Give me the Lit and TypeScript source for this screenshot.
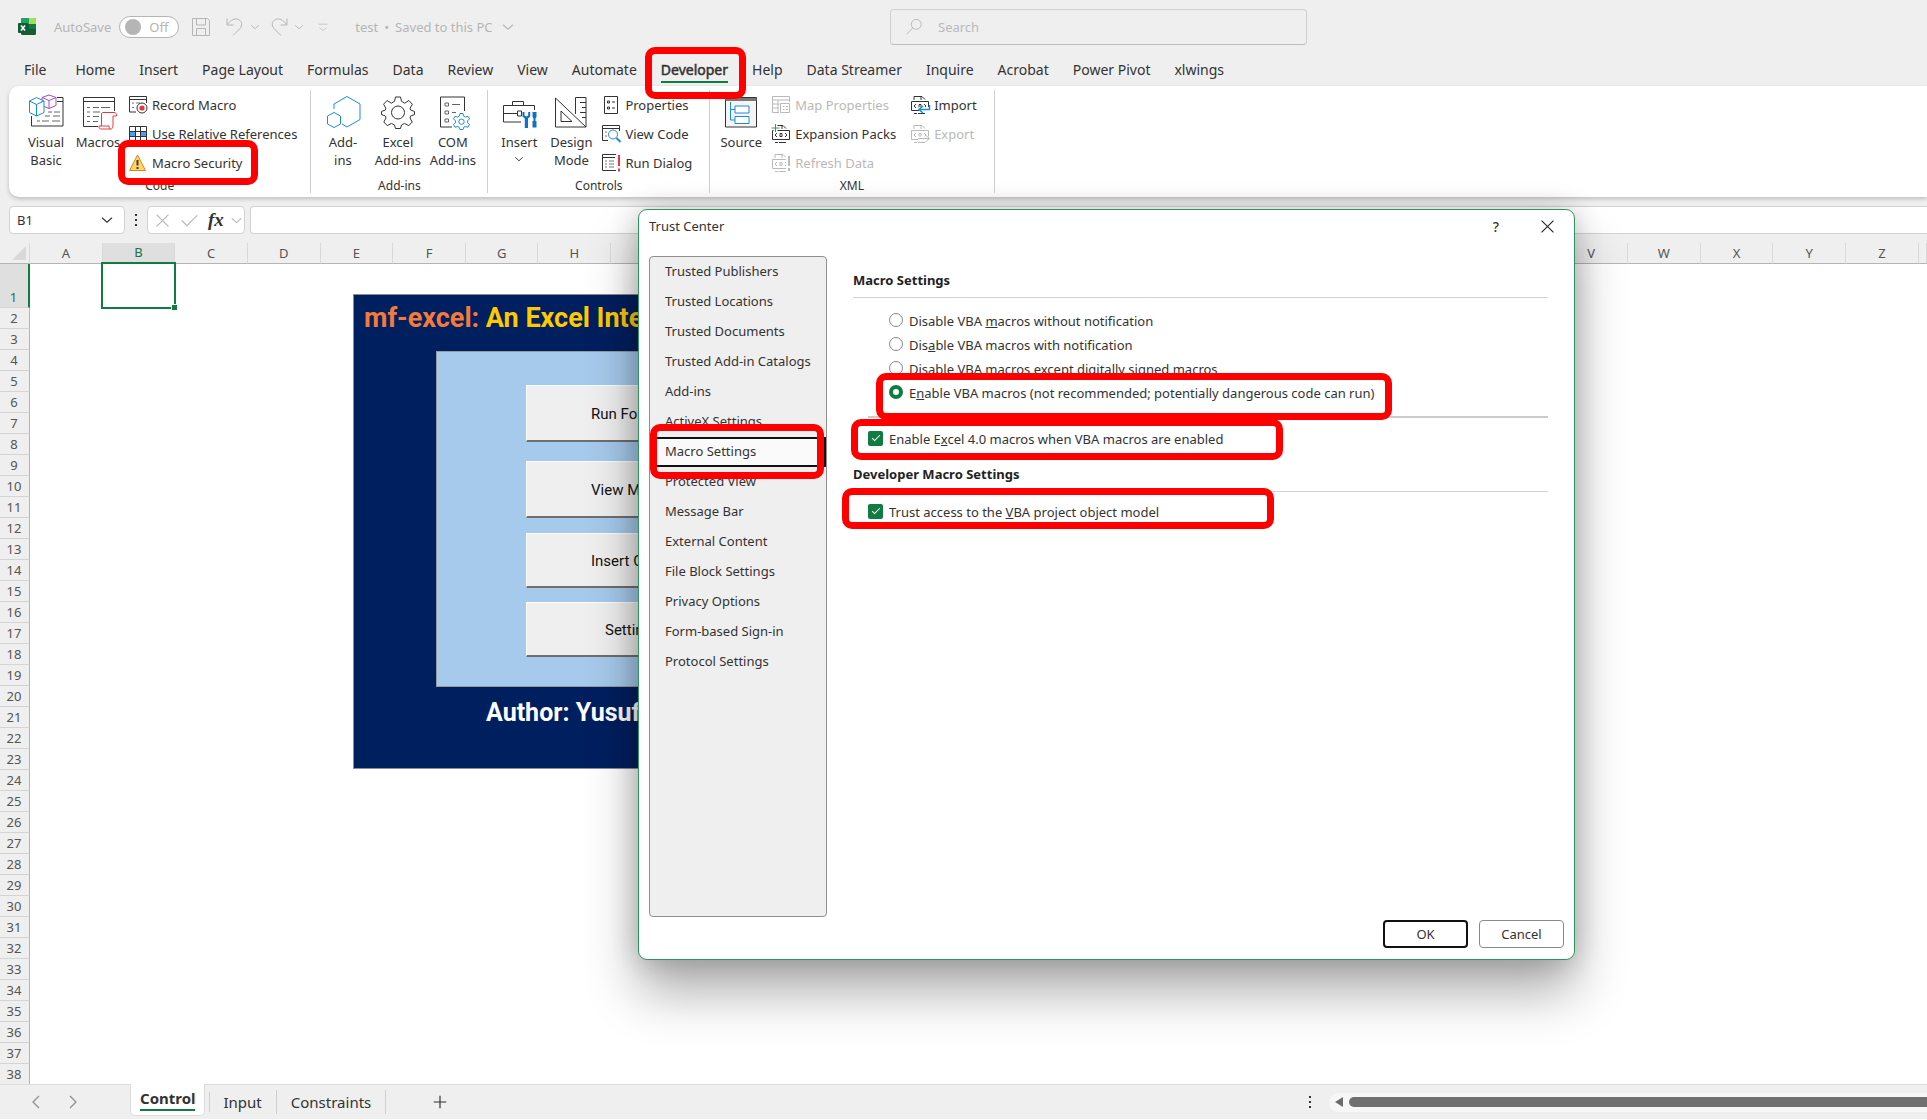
import { LitElement, html, css, svg, nothing, TemplateResult } from "lit";
import { customElement, property } from "lit/decorators.js";
import { classMap } from "lit/directives/class-map.js";

const BLUE = "#1e8bd8";
const RED = "#e8383d";

/* Glyph artwork. Large glyphs use a 36 unit box, small ones a 20 unit box. */
const LARGE: Record<string, TemplateResult> = {
  visualBasic: svg`
    <path d="M29 3.500h6v28.500H3.500V22M29 7.500h6" />
    <path d="M20 18h4M26 18h6M17 22h5M25 22h7M9 27h3M14 27h7M24 27h8" stroke="#666" />
    <path fill="#fff" stroke="#b146c2" d="M21 1l7 2.500v8L21 14.500l-7-3v-8zM14 3.500l7 3 7-3M21 6.500v8" />
    <path fill="#fff" stroke="${BLUE}" d="M8.500 3.500L16 7v11.500l-7.500 3.500L1.500 18.500V7zM1.500 7l7 3.500L16 7M8.500 10.500V22" />`,
  macros: svg`
    <path d="M18 32.500H3.500v-29h31V17M3.500 7.500h31" />
    <path d="M7 13.500h3M13 13.500h6M21 13.500h9M7 18h3M13 18h7M7 22.500h3M13 22.500h6M7 27.500h3M13 27.500h5" stroke="#666" />
    <path fill="#fff" stroke="${RED}" d="M23 18.500h11c2 0 3 1.500 2.500 3.500H33v10c0 2-1 3-2.500 3H20.500c-1 0-1.500-1-1.500-3h10c0 2 .5 3 1.500 3M21.500 32V20c0-1 .5-1.500 1.500-1.500" />`,
  addins: svg`<path stroke="${BLUE}" d="M9 15V10l13-7.500 13 7.500v15.500l-13 7.500-5-3M9 18.500l6.500 3.500v8L9 33.500 2.500 30v-8z" />`,
  excelAddins: svg`
    <path d="M14.500 7.300l1-4.300h5l1 4.300 3.200 1.900 4.200-2.700 3.500 3.700-2.200 4 .3 1.700 4 1.600v3l-4 1.600-.5 1.900 2.200 4-3.500 3.700-4.200-2.300-3 1.600-1 3.500h-5l-1-3.500-3-1.600-4.200 2.300-3.500-3.700 2.200-4-.5-1.900-4-1.600v-3l4-1.600.3-1.700-2.200-4 3.500-3.700 4.200 2.700z" />
    <circle cx="18" cy="18.500" r="6.500" />`,
  comAddins: svg`
    <path d="M17 33H5.500V3h24v14" />
    <path d="M10 9h3.500v3H10zM10 17h3.500v3H10zM10 25h3.500v3H10zM17 10.500h8M17 18.500h4" stroke="#666" />
    <path fill="#fff" stroke="${BLUE}" d="M25 19.500h3l.8 2.700 1.500.9 2.700-.8 1.500 2.600-2 2v1.700l2 2-1.500 2.600-2.700-.7-1.500.8-.8 2.200h-3l-.8-2.200-1.500-.8-2.700.7-1.500-2.600 2-2v-1.700l-2-2 1.500-2.600 2.700.8 1.500-.9z" />
    <circle cx="26.500" cy="27.700" r="2.700" stroke="${BLUE}" />`,
  insert: svg`
    <path d="M20 28H2.500V11.500h31V16M11.500 11V7.500h11V11M2.500 19.500h14M16.500 17h4v5h-4z" />
    <path fill="#1270c4" stroke="none" d="M21.500 18v4.500l2.300 2V34h3.200v-9.500l2.200-2V18h-2v3.500l-1.800 1-1.900-1V18zM31.500 18h4v5l-1 1.500v2.500h1v6.500h-4V27h1v-2.500l-1-1.500z" />`,
  design: svg`
    <path d="M2.500 4v29H33zM8 17v10.500h11zM22.500 20V3.500H33V33M27 8.500h6M29 13.500h4M27 18.500h6M29 23.500h4" />`,
  source: svg`
    <path fill="#f5f5f5" d="M2.500 3.500h31v29.500h-31z" />
    <path d="M2.500 5.500h31" stroke-width="3" stroke="#777" />
    <path stroke="${BLUE}" fill="#fff" d="M12 12h14v7H12zM12 22.500h14v7H12z" />
    <path stroke="${BLUE}" d="M7.500 8v18H12M7.500 15.500H12" />`,
};

const xmlDoc = svg`
  <path d="M4 5V1.500h8l3 3M11 1.500V5M1.500 6.500h17v9h-17zM4 18.500h3M8 18.500h7" />
  <path d="M6 9l-2 2 2 2M14 9l2 2-2 2M9 9.500h2v3H9z" />`;

const SMALL: Record<string, TemplateResult> = {
  record: svg`
    <path d="M8 17H1.500V1.500h17V8M1.500 4.500h17" /><path d="M4 8h2M8 8h4M4 12.500h2" stroke="#777" />
    <circle cx="14" cy="13" r="5" fill="#fff" /><circle cx="14" cy="13" r="2.600" fill="${RED}" stroke="none" />`,
  relative: svg`
    <path fill="#fff" d="M1.500 2.500h17v15h-17z" /><path stroke="none" fill="#4aa3ea" d="M2 7.500h5v5H2zM13 7.500h5v5h-5z" />
    <path d="M1.500 7.500h17M1.500 12.500h17M7.500 2.500v15M12.500 2.500v15" />`,
  security: svg`
    <path d="M9.500 2L17.500 17.500H1.500z" fill="#fbd66b" stroke="#e8811a" />
    <path d="M9.500 7v5.500M9.500 14v2" stroke="#4a3b1c" stroke-width="2" />`,
  properties: svg`<path d="M3.500 1.500h13v17h-13z" /><path d="M6.500 6h2v2h-2zM6.500 12h2v2h-2zM11 7h3M11 13h3" />`,
  viewCode: svg`
    <path d="M7 16.500H1.500v-15h17V7M1.500 4.500h17" /><path d="M4 8h2M4 12h2" stroke="#777" />
    <circle cx="12" cy="10.500" r="4.500" stroke="${BLUE}" fill="#fff" /><path d="M15.500 14l4 4" stroke="${BLUE}" stroke-width="2" />`,
  runDialog: svg`
    <path d="M15 17.500H1.500v-16H15M1.500 4.500H14" /><path d="M4 8h2M8 8h5M4 11h2M8 11h5M4 14h2M8 14h5" stroke="#777" />
    <path d="M18 2v11M18 15.500v3" stroke="${RED}" stroke-width="2" />`,
  mapProperties: svg`
    <path d="M8 17.500H1.500v-16h17V7M1.500 5h17M1.500 9h7M1.500 13h6M7 5v12" />
    <path fill="#fff" d="M9.500 8.500h9v9h-9z" /><path d="M12 11.500h1.500M15 11.500h2M12 14.500h1.500M15 14.500h2" />`,
  expansion: svg`${xmlDoc}<path d="M4.500 0v8M.5 4h8" stroke="#fff" stroke-width="4" /><path d="M4.500 0v8M.5 4h8" stroke="#2f9e52" />`,
  refresh: svg`${xmlDoc}<path d="M17.500 3v16" stroke="#fff" stroke-width="5" /><path d="M18 3v10M18 15v3" stroke-width="2" />`,
  importXml: svg`${xmlDoc}<path d="M9 14.500h11" stroke="#fff" stroke-width="5" /><path d="M19.500 10v4.500H9M13 11l-4 3.500 4 3.500" stroke="${BLUE}" stroke-width="1.500" />`,
  exportXml: svg`${xmlDoc}<path d="M8 14.500h11" stroke="#fff" stroke-width="4" /><path d="M8 14.500h11M15.500 11l4 3.500-4 3.500" />`,
  save: svg`<path d="M1.500 1.500h15l2 2v15h-17zM5.500 2v6h9V2M5.500 18v-6.500h9V18" />`,
  undo: svg`<path d="M2 1.500V8h6.500M2.500 7.500C6 2.500 10 1 13.500 2.500c4 2 4 6 1.500 9L8 18.500" />`,
  redo: svg`<path d="M18 1.500V8h-6.500M17.500 7.500C14 2.500 10 1 6.500 2.500c-4 2-4 6-1.500 9l7 7" />`,
  chevron: svg`<path stroke-width="1.300" d="M4.500 7.500l5.500 5 5.500-5" />`,
  customize: svg`<path d="M4 6h12M5 11l5 4 5-4" />`,
  search: svg`<circle cx="12.500" cy="7" r="5.500" /><path d="M8.500 11L2 18" />`,
  close: svg`<path stroke-width="1.300" d="M3 3l14 14M17 3L3 17" />`,
  check: svg`<path stroke-width="1.300" d="M1 10l6 6L19 4" />`,
  prev: svg`<path stroke-width="1.300" d="M13 4l-6 6 6 6" />`,
  next: svg`<path stroke-width="1.300" d="M7 4l6 6-6 6" />`,
  plus: svg`<path stroke-width="1.300" d="M10 3v14M3 10h14" />`,
  dots: svg`<path stroke="none" fill="currentColor" d="M9 4h2v2H9zM9 9h2v2H9zM9 14h2v2H9z" />`,
  scrollLeft: svg`<path stroke="none" fill="#6b6b6b" d="M14 5v10L6 10z" />`,
};

@customElement("ui-glyph")
class UiGlyph extends LitElement {
  @property() name = "";
  @property({ type: Boolean, reflect: true }) large = false;

  static styles = css`
    :host { display: inline-flex; flex: none; width: 20px; height: 20px; }
    :host([large]) { width: 36px; height: 36px; }
    .art { width: 100%; height: 100%; fill: none; stroke: currentColor; overflow: visible; }
  `;

  render() {
    const box = this.large ? 36 : 20;
    const art = this.large ? LARGE[this.name] : SMALL[this.name];
    return html`<svg class="art" viewBox="0 0 ${box} ${box}" aria-hidden="true">${art}</svg>`;
  }
}

type Small = { icon: string; label: string; disabled?: boolean; marked?: boolean };
type Big = { icon: string; lines: string[]; menu?: boolean };
type Group = { name: string; big: Big[]; small: Small[][] };

const GROUPS: Group[] = [
  {
    name: "Code",
    big: [{ icon: "visualBasic", lines: ["Visual", "Basic"] }, { icon: "macros", lines: ["Macros"] }],
    small: [[
      { icon: "record", label: "Record Macro" },
      { icon: "relative", label: "Use Relative References" },
      { icon: "security", label: "Macro Security", marked: true },
    ]],
  },
  {
    name: "Add-ins",
    big: [
      { icon: "addins", lines: ["Add-", "ins"] },
      { icon: "excelAddins", lines: ["Excel", "Add-ins"] },
      { icon: "comAddins", lines: ["COM", "Add-ins"] },
    ],
    small: [],
  },
  {
    name: "Controls",
    big: [{ icon: "insert", lines: ["Insert"], menu: true }, { icon: "design", lines: ["Design", "Mode"] }],
    small: [[
      { icon: "properties", label: "Properties" },
      { icon: "viewCode", label: "View Code" },
      { icon: "runDialog", label: "Run Dialog" },
    ]],
  },
  {
    name: "XML",
    big: [{ icon: "source", lines: ["Source"] }],
    small: [
      [
        { icon: "mapProperties", label: "Map Properties", disabled: true },
        { icon: "expansion", label: "Expansion Packs" },
        { icon: "refresh", label: "Refresh Data", disabled: true },
      ],
      [
        { icon: "importXml", label: "Import" },
        { icon: "exportXml", label: "Export", disabled: true },
      ],
    ],
  },
];

const TABS = ["File", "Home", "Insert", "Page Layout", "Formulas", "Data", "Review", "View", "Automate",
  "Developer", "Help", "Data Streamer", "Inquire", "Acrobat", "Power Pivot", "xlwings"];

@customElement("excel-ribbon")
class ExcelRibbon extends LitElement {
  static styles = css`
    :host { display: block; }
    button { font: inherit; color: inherit; background: none; border: 0; padding: 0; margin: 0; }
    .tabs { display: flex; gap: 24px; padding: 2px 24px 0; height: 34px; box-sizing: border-box; align-items: center; font-size: 14px; }
    .tab { position: relative; white-space: nowrap; line-height: 20px; }
    .tab:first-child { margin-right: 5px; }
    .tab.active { -webkit-text-stroke: 0.5px currentColor; }
    .tab.active::before { content: ""; position: absolute; left: 0; right: 0; bottom: -3px; height: 2px; background: #107c41; }
    .callout { position: absolute; border: 7px solid #f00; border-radius: 10px; pointer-events: none; z-index: 3; }
    .tab .callout { inset: -13px -18px -19px -16px; }
    .small .callout { inset: -8px -16px -8px -10px; }
    .ribbon { display: flex; margin-left: 9px; height: 111px; box-sizing: border-box; padding: 4px 0; background: #fff;
      border-radius: 10px 0 0 10px; box-shadow: 0 2px 4px rgba(0, 0, 0, 0.2); font-size: 13px; }
    .group { display: flex; flex-direction: column; border-right: 1px solid #d0d0d0; }
    .body { display: flex; flex: none; height: 89px; box-sizing: border-box; gap: 4px; padding: 0 17px 0 5px; }
    .group:first-child .body { padding: 0 13px 0 11px; }
    .plain .body { padding: 0 7px 0 4px; }
    .bigs { display: flex; }
    .big { display: flex; flex-direction: column; align-items: center; width: 52px; line-height: 18px; padding-top: 4px; }
    .plain .big { width: 55px; }
    .words { display: flex; flex-direction: column; align-items: center; padding-top: 3px; }
    .menu { width: 14px; height: 16px; }
    .list { display: flex; flex-direction: column; align-items: flex-start; padding-right: 10px; }
    .list:last-child { padding-right: 0; }
    .small { position: relative; display: flex; align-items: center; gap: 4px; height: 29px; line-height: 18px; white-space: nowrap; }
    .small:disabled { color: #b9b9b9; }
    .name { text-align: center; font-size: 12px; line-height: 14px; }
  `;

  private bigButton(b: Big) {
    return html`<button class="big">
      <ui-glyph large name=${b.icon}></ui-glyph>
      <span class="words">${b.lines.map((l) => html`<span>${l}</span>`)}
        ${b.menu ? html`<ui-glyph class="menu" name="chevron"></ui-glyph>` : nothing}</span>
    </button>`;
  }

  private smallButton(s: Small) {
    return html`<button class="small" ?disabled=${s.disabled}>
      <ui-glyph name=${s.icon}></ui-glyph><span>${s.label}</span>
      ${s.marked ? html`<span class="callout"></span>` : nothing}
    </button>`;
  }

  render() {
    return html`
      <nav class="tabs">
        ${TABS.map((t) => html`<button class=${classMap({ tab: true, active: t === "Developer" })}>${t}${t === "Developer"
          ? html`<span class="callout"></span>` : nothing}</button>`)}
      </nav>
      <div class="ribbon">
        ${GROUPS.map((g) => html`
          <section class=${classMap({ group: true, plain: !g.small.length })}>
            <div class="body">
              <div class="bigs">${g.big.map((b) => this.bigButton(b))}</div>
              ${g.small.map((col) => html`<div class="list">${col.map((s) => this.smallButton(s))}</div>`)}
            </div>
            <div class="name">${g.name}</div>
          </section>`)}
      </div>`;
  }
}

const PAGES = ["Trusted Publishers", "Trusted Locations", "Trusted Documents", "Trusted Add-in Catalogs", "Add-ins",
  "ActiveX Settings", "Macro Settings", "Protected View", "Message Bar", "External Content", "File Block Settings",
  "Privacy Options", "Form-based Sign-in", "Protocol Settings"];

@customElement("trust-center")
class TrustCenter extends LitElement {
  static styles = css`
    :host { display: block; box-sizing: border-box; background: #fff; border: 1px solid #2e9560; border-radius: 9px; font-size: 13px;
      box-shadow: 0 32px 52px rgba(0, 0, 0, 0.32), 0 0 28px rgba(0, 0, 0, 0.2); }
    button { font: inherit; color: inherit; background: none; border: 0; padding: 0; margin: 0; }
    .dialog { display: flex; flex-direction: column; height: 100%; }
    .title { display: flex; align-items: center; height: 32px; padding: 0 17px 0 10px; }
    .title h1 { flex: 1; font-size: 13px; font-weight: 400; margin: 0; }
    .icon { display: flex; width: 20px; justify-content: center; font-size: 14px; font-weight: 500; }
    .close { margin-left: 31px; color: #222; }
    .close ui-glyph { width: 17px; height: 17px; }
    .main { flex: 1; display: flex; padding: 14px 26px 0 10px; gap: 26px; }
    .pages { width: 178px; box-sizing: border-box; background: #efefef; border: 1px solid #8f8f8f; border-radius: 4px; }
    .page { position: relative; display: block; width: 100%; height: 30px; padding: 0 0 2px 15px; text-align: left; white-space: nowrap; }
    .page.current { background: #fafafa; box-shadow: inset 0 0 0 2px #111; }
    .page .callout { inset: -13px 2px -12px 0; }
    .callout { position: absolute; border: 7px solid #f00; border-radius: 10px; pointer-events: none; z-index: 2; }
    .content { flex: 1; }
    h2 { margin: 0; font-size: 13px; line-height: 18px; font-weight: 700; color: #222; }
    .first { padding: 15px 0 8px; border-bottom: 1px solid #d2d2d2; }
    .second { padding: 4px 0 8px; border-bottom: 1px solid #d2d2d2; }
    .choices { border: 0; margin: 0 0 0 15px; padding: 11px 0 11px 21px; border-bottom: 2px solid #cbcbcb; }
    .choice { position: relative; display: flex; align-items: center; height: 24px; gap: 6px; width: max-content; }
    .option { position: relative; display: flex; align-items: center; height: 42px; gap: 6px; margin: 0 0 1px 15px; width: max-content; }
    .option.trust { height: 40px; }
    input { appearance: none; box-sizing: border-box; margin: 0 0 2px; flex: none; }
    input[type="radio"] { width: 14px; height: 14px; border: 1px solid #8a8a8a; border-radius: 50%; background: #fff; }
    input[type="radio"]:checked { border: 4px solid #107c41; }
    input[type="checkbox"] { position: relative; width: 15px; height: 15px; border-radius: 2px; background: #107c41; }
    input[type="checkbox"]::after { content: ""; position: absolute; left: 4px; top: 4px; width: 7px; height: 3px; box-sizing: content-box;
      border: solid #fff; border-width: 0 0 1px 1px; transform: rotate(-45deg); }
    .choice .callout { inset: -8px -18px -15px -13px; }
    .option .callout { inset: 1px -60px 0 -17px; }
    .option.trust .callout { inset: -4px -115px 3px -26px; }
    .footer { display: flex; justify-content: flex-end; gap: 11px; padding: 3px 10px 11px; }
    .action { width: 85px; height: 28px; border: 1px solid #8a8a8a; border-radius: 4px; }
    .action.primary { border: 2px solid #111; }
  `;

  render() {
    return html`<div class="dialog" role="dialog" aria-label="Trust Center">
      <div class="title">
        <h1>Trust Center</h1>
        <button class="icon">?</button>
        <button class="icon close" aria-label="Close"><ui-glyph name="close"></ui-glyph></button>
      </div>
      <div class="main">
        <nav class="pages">
          ${PAGES.map((p) => {
            const current = p === "Macro Settings";
            return html`<button class=${classMap({ page: true, current })}>${p}${current ? html`<span class="callout"></span>` : nothing}</button>`;
          })}
        </nav>
        <div class="content">
          <h2 class="first">Macro Settings</h2>
          <div class="choices" role="radiogroup" aria-label="Macro Settings">
            <label class="choice"><input type="radio" name="vba" /><span>Disable VBA <u>m</u>acros without notification</span></label>
            <label class="choice"><input type="radio" name="vba" /><span>Dis<u>a</u>ble VBA macros with notification</span></label>
            <label class="choice"><input type="radio" name="vba" /><span>Disable VBA macros except di<u>g</u>itally signed macros</span></label>
            <label class="choice"><input type="radio" name="vba" checked /><span>E<u>n</u>able VBA macros (not recommended; potentially dangerous code can run)</span><span class="callout"></span></label>
          </div>
          <label class="option"><input type="checkbox" checked /><span>Enable E<u>x</u>cel 4.0 macros when VBA macros are enabled</span><span class="callout"></span></label>
          <h2 class="second">Developer Macro Settings</h2>
          <label class="option trust"><input type="checkbox" checked /><span>Trust access to the <u>V</u>BA project object model</span><span class="callout"></span></label>
        </div>
      </div>
      <div class="footer">
        <button class="action primary">OK</button>
        <button class="action">Cancel</button>
      </div>
    </div>`;
  }
}

const COLUMNS = [..."ABCDEFGHIJKLMNOPQRSTUVWXYZ"];
const ROWS = Array.from({ length: 38 }, (_, i) => i + 1);

@customElement("app-root")
class AppRoot extends LitElement {
  static styles = css`
    :host { display: flex; flex-direction: column; height: 100vh; background: #efefef; overflow: hidden; color: #333;
      font-family: "Noto Sans", "Open Sans", sans-serif; font-size: 13px; }
    button { font: inherit; color: inherit; background: none; border: 0; padding: 0; margin: 0; }
    .bar { display: grid; grid-template-columns: 890fr 417fr 620fr; height: 54px; color: #b5b5b5; }
    .quick { display: flex; align-items: center; padding-left: 17px; white-space: nowrap; }
    .logo { width: 20px; height: 20px; margin-right: 17px; }
    .auto { display: flex; align-items: center; gap: 8px; margin-right: 12px; }
    .pill { display: flex; align-items: center; gap: 8px; box-sizing: border-box; width: 60px; height: 22px; padding-left: 5px;
      border: 1px solid #b5b5b5; border-radius: 11px; background: #fff; }
    .switch { appearance: none; width: 16px; height: 16px; margin: 0; border-radius: 50%; background: #b5b5b5; }
    .quick button { display: flex; }
    .quick .save { margin-right: 14px; }
    .quick .arrow { width: 12px; margin: 0 9px 0 3px; }
    .arrow ui-glyph { width: 14px; height: 20px; }
    .quick .more { margin: 0 25px 0 3px; }
    .more ui-glyph { width: 14px; height: 14px; }
    .quick .file { align-items: center; gap: 6px; }
    .file ui-glyph { width: 18px; }
    .search { display: flex; align-items: center; gap: 15px; box-sizing: border-box; height: 36px; margin-top: 9px; padding: 0 14px;
      border: 1px solid #d0d0d0; border-bottom-color: #bdbdbd; border-radius: 4px; }
    .search input { flex: 1; border: 0; background: none; font: inherit; padding: 0; outline: 0; }
    .search input::placeholder { color: #b9b9b9; }
    .search ui-glyph { width: 18px; height: 18px; }
    excel-ribbon { margin-top: -2px; }
    .formula { display: flex; align-items: center; padding: 9px 0 9px 9px; }
    .field { display: flex; align-items: center; box-sizing: border-box; height: 28px; background: #fff; border: 1px solid #d2d2d2; border-radius: 4px; }
    .namebox { width: 116px; padding: 0 8px 0 7px; }
    .namebox input { width: 70px; flex: 1; min-width: 0; border: 0; font: inherit; color: inherit; padding: 0; outline: 0; }
    .field button { display: flex; }
    .namebox ui-glyph { width: 18px; height: 18px; }
    .tools ui-glyph { width: 17px; height: 17px; }
    .grip { margin: 0 1px; }
    .tools { width: 98px; padding: 0 0 0 6px; gap: 10px; color: #b5b5b5; }
    .fx { color: #333; font: italic 700 19px/20px "Liberation Serif", serif; }
    .fx + button { margin-left: -6px; }
    .entry { flex: 1; margin-left: 5px; border-right: 0; border-radius: 4px 0 0 4px; outline: 0; font: inherit; }
    .area { position: relative; flex: 1; min-height: 0; overflow: hidden; background: linear-gradient(#efefef 21px, #fff 21px); }
    .sheet { table-layout: fixed; width: 100%; border-collapse: separate; border-spacing: 0; }
    .sheet th { padding: 0; box-sizing: border-box; font-weight: 400; height: 21px; line-height: 20px; color: #555; background: #efefef; }
    .sheet td { padding: 0; background: #fff; }
    .rowhead { width: 30px; }
    .tail { width: 8px; }
    .sheet thead th { border-bottom: 1px solid #b5b5b5; border-right: 1px solid #d9d9d9; }
    .sheet thead th.picked { background: #dfdfdf; color: #217346; border-bottom: 2px solid #107c41; line-height: 19px; }
    .sheet tbody th { border-right: 1px solid #b5b5b5; border-bottom: 1px solid #d4d4d4; padding-right: 1px; }
    .sheet tbody th.picked { height: 44px; background: #dfdfdf; color: #217346; border-right: 2px solid #107c41; vertical-align: bottom; }
    .corner svg { display: block; width: 14px; height: 14px; margin-left: 12px; }
    .cell { position: relative; }
    .cursor { position: absolute; inset: -2px -1px -1px -2px; border: 2px solid #107c41; }
    .cursor::after { content: ""; position: absolute; right: -4px; bottom: -4px; width: 5px; height: 5px; background: #107c41; border: 1px solid #fff; }
    .card { position: absolute; left: 353px; top: 51px; width: 700px; height: 475px; box-sizing: border-box; background: #001f5f; border: 1px solid #8c8c8c;
      display: flex; flex-direction: column; font-family: Roboto, "Liberation Sans", sans-serif; }
    .card h1, .card p { margin: 0; line-height: 32px; font-weight: 700; white-space: nowrap; }
    .card h1 { padding: 7px 0 17px 10px; font-size: 27px; color: #ffc900; }
    .brand { color: #f47a3c; }
    .card p { padding: 10px 0 0 132px; font-size: 25px; color: #fff; }
    .panel { box-sizing: border-box; height: 336px; margin: 0 82px; padding: 33px 0 0 89px; background: #a6caec; border: 1px solid #9a9a9a;
      display: grid; grid-template-rows: 57px 61px 55px 54px; align-content: start; align-items: end; row-gap: 15px; }
    .macro { height: 57px; width: 300px; box-sizing: border-box; background: #efefef; border: 1px solid #fff; border-bottom: 2px solid #6f6f6f;
      color: #111; font-size: 15px; text-align: left; padding: 2px 0 0 64px; white-space: nowrap; }
    .macro:nth-child(n + 3) { height: 55px; }
    .macro:last-child { padding-left: 78px; }
    trust-center { position: absolute; left: 638px; top: -34px; width: 937px; height: 751px; z-index: 2; }
    .area-wrap { position: relative; flex: 1; min-height: 0; display: flex; }
    .sheets { display: flex; align-items: center; height: 36px; box-sizing: border-box; border-top: 1px solid #dcdcdc; border-bottom: 1px solid #fff;
      padding-left: 26px; font-size: 15px; color: #333; }
    .sheets button { display: flex; }
    .sheets .nav { color: #8f8f8f; margin-right: 17px; }
    .nav ui-glyph { width: 20px; height: 20px; }
    .sheets .tab { align-items: center; height: 24px; padding: 0 14px; border-right: 1px solid #cfcfcf; }
    .sheets .tab.open { position: relative; height: 32px; align-self: flex-start; margin: -1px 4px 0 30px; padding: 0 8px 4px 9px; background: #fff; font-weight: 700;
      border: 1px solid #dcdcdc; border-top: 0; border-radius: 0 0 5px 5px; }
    .tab.open::after { content: ""; position: absolute; left: 9px; right: 9px; bottom: 4px; height: 2px; background: #107c41; }
    .divide { width: 1px; height: 20px; background: #cfcfcf; }
    .sheets .add { margin-left: 45px; }
    .add ui-glyph { width: 18px; height: 18px; }
    .scroll { display: flex; align-items: center; margin-left: auto; width: 33%; gap: 9px; }
    .track { flex: 1; display: flex; align-items: center; height: 19px; border-radius: 10px 0 0 10px; background: #f7f7f7; }
    .thumb { flex: 1; height: 10px; border-radius: 5px 0 0 5px; background: #707070; }
  `;

  private titleBar() {
    return html`<header class="bar">
      <div class="quick">
        <svg class="logo" viewBox="0 0 20 20" aria-hidden="true">
          <rect x="4" y="1" width="15" height="17" rx="1.500" fill="#185c37" />
          <path d="M4 7V2.500Q4 1 5.500 1H12v6z" fill="#21a366" /><path d="M12 1h5.500Q19 1 19 2.500V7h-7z" fill="#a3e05a" />
          <path d="M12 7h7v5h-7z" fill="#107c41" />
          <rect x="1" y="6" width="10" height="10" rx="1" fill="#0f5f32" />
          <path d="M4 8.500l4 5M8 8.500l-4 5" stroke="#fff" stroke-width="1.600" />
        </svg>
        <label class="auto"><span>AutoSave</span><span class="pill"><input class="switch" type="checkbox" role="switch" /><span>Off</span></span></label>
        <button class="save" aria-label="Save"><ui-glyph name="save"></ui-glyph></button>
        <button aria-label="Undo"><ui-glyph name="undo"></ui-glyph></button>
        <button class="arrow" aria-label="Undo history"><ui-glyph name="chevron"></ui-glyph></button>
        <button aria-label="Redo"><ui-glyph name="redo"></ui-glyph></button>
        <button class="arrow" aria-label="Redo history"><ui-glyph name="chevron"></ui-glyph></button>
        <button class="more" aria-label="Customize toolbar"><ui-glyph name="customize"></ui-glyph></button>
        <button class="file"><span>test</span><span>•</span><span>Saved to this PC</span><ui-glyph name="chevron"></ui-glyph></button>
      </div>
      <label class="search"><ui-glyph name="search"></ui-glyph><input type="text" placeholder="Search" aria-label="Search" /></label>
    </header>`;
  }

  private formulaBar() {
    return html`<div class="formula">
      <div class="field namebox"><input type="text" aria-label="Name box" .value=${"B1"} />
        <button aria-label="Names"><ui-glyph name="chevron"></ui-glyph></button></div>
      <ui-glyph class="grip" name="dots"></ui-glyph>
      <div class="field tools">
        <button aria-label="Cancel entry"><ui-glyph name="close"></ui-glyph></button>
        <button aria-label="Enter"><ui-glyph name="check"></ui-glyph></button>
        <button class="fx">fx</button>
        <button aria-label="Functions"><ui-glyph name="chevron"></ui-glyph></button>
      </div>
      <input class="field entry" type="text" aria-label="Formula bar" />
    </div>`;
  }

  private grid() {
    return html`<table class="sheet">
      <thead><tr>
        <th class="rowhead corner"><svg viewBox="0 0 14 14" aria-hidden="true"><path d="M14 0v14H0z" fill="#d9d9d9" /></svg></th>
        ${COLUMNS.map((c) => html`<th scope="col" class=${classMap({ picked: c === "B" })}>${c}</th>`)}
        <th class="tail"></th>
      </tr></thead>
      <tbody>
        ${ROWS.map((r) => html`<tr>
          <th scope="row" class=${classMap({ picked: r === 1 })}>${r}</th>
          ${r === 1 ? html`<td></td><td class="cell"><div class="cursor"></div></td><td colspan="25"></td>` : html`<td colspan="27"></td>`}
        </tr>`)}
      </tbody>
    </table>`;
  }

  render() {
    return html`
      ${this.titleBar()}
      <excel-ribbon></excel-ribbon>
      ${this.formulaBar()}
      <div class="area-wrap">
        <main class="area">
          ${this.grid()}
          <section class="card">
            <h1><span class="brand">mf-excel:</span> An Excel Inte</h1>
            <div class="panel">
              <button class="macro">Run Fo</button>
              <button class="macro">View M</button>
              <button class="macro">Insert C</button>
              <button class="macro">Settin</button>
            </div>
            <p>Author: Yusuf</p>
          </section>
        </main>
        <trust-center></trust-center>
      </div>
      <footer class="sheets">
        <button class="nav" aria-label="Previous sheets"><ui-glyph name="prev"></ui-glyph></button>
        <button class="nav" aria-label="Next sheets"><ui-glyph name="next"></ui-glyph></button>
        <button class="tab open">Control</button>
        <span class="divide"></span>
        <button class="tab">Input</button>
        <button class="tab">Constraints</button>
        <button class="add" aria-label="New sheet"><ui-glyph name="plus"></ui-glyph></button>
        <div class="scroll"><ui-glyph name="dots"></ui-glyph>
          <div class="track"><ui-glyph name="scrollLeft"></ui-glyph><div class="thumb"></div></div></div>
      </footer>`;
  }
}
